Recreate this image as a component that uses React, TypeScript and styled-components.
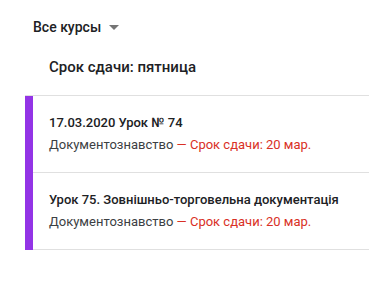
import React from 'react';
import styled, { createGlobalStyle } from 'styled-components';

const GlobalStyle = createGlobalStyle`
  body {
    margin: 0;
    background: #fff;
    font-family: Roboto, "Noto Sans", sans-serif;
  }
`;

const items = [
  { title: '17.03.2020 Урок № 74', course: 'Документознавство', due: 'Срок сдачи: 20 мар.' },
  { title: 'Урок 75. Зовнішньо-торговельна документація', course: 'Документознавство', due: 'Срок сдачи: 20 мар.' },
];

const App = () => (
  <>
    <GlobalStyle />
    <Page>
      <Filter>
        Все курсы
        <Caret />
      </Filter>
      <Heading>Срок сдачи: пятница</Heading>
      <List>
        {items.map((item) => (
          <Card key={item.title}>
            <Bar />
            <Content>
              <Title>{item.title}</Title>
              <Meta>
                {item.course} <Due>— {item.due}</Due>
              </Meta>
            </Content>
          </Card>
        ))}
      </List>
    </Page>
  </>
);

export default App;

const Page = styled.div`
  padding: 18px 0 0 25px;
`;

const Filter = styled.div`
  display: flex;
  align-items: center;
  margin-left: 8px;
  height: 18px;
  font-size: 14px;
  font-weight: 500;
  color: #202124;
`;

const Caret = styled.span`
  width: 0;
  height: 0;
  margin-left: 8px;
  border-left: 5px solid transparent;
  border-right: 5px solid transparent;
  border-top: 5px solid #757575;
`;

const Heading = styled.div`
  margin: 22px 0 0 24px;
  height: 19px;
  line-height: 19px;
  font-size: 15px;
  font-weight: 500;
  color: #202124;
`;

const List = styled.div`
  margin-top: 18px;
  border-top: 1px solid #e0e0e0;
`;

const Card = styled.div`
  display: flex;
`;

const Bar = styled.div`
  width: 8px;
  background: #9334e6;
`;

const Content = styled.div`
  flex: 1;
  height: 76px;
  padding-left: 16px;
  border-bottom: 1px solid #e0e0e0;
  display: flex;
  flex-direction: column;
  justify-content: center;
`;

const Title = styled.div`
  font-size: 13px;
  line-height: 18px;
  font-weight: 500;
  color: #202124;
`;

const Meta = styled.div`
  margin-top: 4px;
  font-size: 13px;
  line-height: 18px;
  color: #3c4043;
`;

const Due = styled.span`
  color: #d93025;
`;
